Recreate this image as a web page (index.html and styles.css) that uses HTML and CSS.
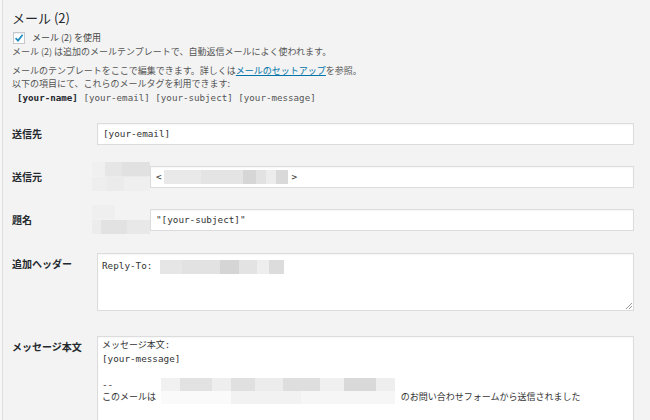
FILE: index.html
```html
<!DOCTYPE html>
<html lang="ja">
<head>
  <meta charset="UTF-8">
  <title>メール (2)</title>
  <link rel="stylesheet" href="styles.css">
</head>
<body>
  <div class="panel">
    <h2 class="title">メール (2)</h2>

    <label class="use-mail">
      <span class="checkbox">
        <svg width="10" height="10" viewBox="0 0 10 10"><path d="M1.6 5.2 L4 7.6 L8.6 1.8" fill="none" stroke="#1e8cbe" stroke-width="1.7"/></svg>
      </span>
      メール (2) を使用
    </label>
    <p class="desc">メール (2) は追加のメールテンプレートで、自動返信メールによく使われます。</p>

    <p class="help">メールのテンプレートをここで編集できます。詳しくは<a href="#">メールのセットアップ</a>を参照。</p>
    <p class="help">以下の項目にて、これらのメールタグを利用できます:</p>
    <p class="tags"><b>[your-name]</b> [your-email] [your-subject] [your-message]</p>

    <div class="fields">
      <div class="row">
        <div class="label">送信先</div>
        <div class="field"><div class="input">[your-email]</div></div>
      </div>

      <div class="row">
        <div class="label">送信元</div>
        <div class="field">
          <span class="mosaic mosaic-a"></span>
          <div class="input">&lt;<span class="blur blur-from"></span>&gt;</div>
        </div>
      </div>

      <div class="row">
        <div class="label">題名</div>
        <div class="field">
          <span class="mosaic mosaic-b"></span>
          <div class="input">"[your-subject]"</div>
        </div>
      </div>

      <div class="row row-area">
        <div class="label">追加ヘッダー</div>
        <div class="field">
          <div class="textarea headers">Reply-To: <span class="blur blur-reply"></span></div>
        </div>
      </div>

      <div class="row row-area row-body">
        <div class="label">メッセージ本文</div>
        <div class="field">
          <div class="textarea body-text">
            <div>メッセージ本文:</div>
            <div>[your-message]</div>
            <div>&nbsp;</div>
            <div>--</div>
            <div>このメールは <span class="blur blur-site"></span> のお問い合わせフォームから送信されました</div>
          </div>
        </div>
      </div>
    </div>
  </div>
</body>
</html>
```

FILE: styles.css
```css
body {
  margin: 0;
  background: #f7f7f7;
  font-family: "Noto Sans CJK JP", "Liberation Sans", sans-serif;
  font-size: 9px;
  color: #555;
  overflow: hidden;
}

.panel {
  margin-left: 2px;
  border-left: 1px solid #dedede;
  background: #f3f3f3;
  height: 420px;
  overflow: hidden;
  padding: 0 16px 0 9px;
}

.title {
  margin: 0;
  padding-top: 8px;
  font-size: 13px;
  line-height: 20px;
  font-weight: normal;
  color: #23282d;
}

.use-mail {
  display: flex;
  align-items: center;
  gap: 7px;
  margin-top: 2px;
  height: 15px;
  color: #444;
}

.checkbox {
  width: 10px;
  height: 10px;
  border: 1px solid #c4c8cc;
  background: #fff;
  margin-left: 1px;
  display: flex;
  align-items: center;
  justify-content: center;
  box-shadow: inset 0 1px 1px rgba(0, 0, 0, 0.08);
}

.desc {
  margin: 0;
  line-height: 14px;
}

.help {
  margin: 0;
  line-height: 13px;
}

.desc + .help {
  margin-top: 5px;
}

.help a {
  color: #0073aa;
}

.tags {
  margin: 1px 0 0 5px;
  line-height: 14px;
  font-family: "DejaVu Sans Mono", monospace;
  font-size: 9.2px;
  color: #555;
}

.tags b {
  color: #23282d;
}

.fields {
  margin-top: 7px;
}

.row {
  display: grid;
  grid-template-columns: 85px 1fr;
  align-items: center;
  height: 43px;
}

.label {
  font-size: 10px;
  font-weight: bold;
  color: #23282d;
}

.field {
  display: flex;
  align-items: center;
}

.input {
  flex: 1;
  height: 20px;
  border: 1px solid #dcdcdc;
  background: #fff;
  box-shadow: inset 0 1px 2px rgba(0, 0, 0, 0.04);
  padding-left: 5px;
  display: flex;
  align-items: center;
  font-family: "DejaVu Sans Mono", "Noto Sans CJK JP", monospace;
  font-size: 9.3px;
  color: #333;
}

.mosaic {
  width: 58px;
  height: 29px;
  margin-left: -5px;
  flex: none;
  background:
    linear-gradient(to right, #f0f0f0 0 22%, #e6e6e6 22% 52%, #e1e1e1 52% 100%) top / 100% 50% no-repeat,
    linear-gradient(to right, #eeeeee 0 25%, #ebebeb 25% 55%, #efefef 55% 100%) bottom / 100% 50% no-repeat;
}

.mosaic-b {
  background:
    linear-gradient(to right, #efefef 0 40%, #f3f3f3 40% 100%) top / 100% 50% no-repeat,
    linear-gradient(to right, #ececec 0 15%, #e2e2e2 15% 60%, #e8e8e8 60% 100%) bottom / 100% 50% no-repeat;
}

.blur {
  display: inline-block;
  height: 14px;
  vertical-align: middle;
}

.blur-from {
  width: 124px;
  margin: 0 4px 0 2px;
  background: linear-gradient(to right, #e9e9e9 0 30%, #e4e4e4 30% 64%, #d6d6d6 64% 74%, #e2e2e2 74% 82%, #ececec 82% 90%, #d9d9d9 90% 100%);
}

.blur-reply {
  width: 124px;
  margin-left: 2px;
  background: linear-gradient(to right, #e6e6e6 0 18%, #e2e2e2 18% 48%, #d5d5d5 48% 64%, #e3e3e3 64% 78%, #eeeeee 78% 88%, #dcdcdc 88% 100%);
}

.blur-site {
  width: 234px;
  height: 26px;
  margin-top: -13px;
  vertical-align: top;
  background:
    linear-gradient(to right, #f1f1f1 0 8%, #e2e2e2 8% 22%, #eeeeee 22% 30%, #e0e0e0 30% 40%, #ececec 40% 52%, #dedede 52% 68%, #f0f0f0 68% 78%, #d9d9d9 78% 92%, #eeeeee 92% 100%) top / 100% 50% no-repeat,
    linear-gradient(to right, #fafafa 0 30%, #f2f2f2 30% 60%, #f6f6f6 60% 100%) bottom / 100% 50% no-repeat;
}

.row-area {
  align-items: start;
  height: auto;
  padding: 12px 0 13px;
}

.row-area .label {
  margin-top: 3px;
}

.row-body {
  padding-bottom: 0;
}

.textarea {
  flex: 1;
  position: relative;
  border: 1px solid #dcdcdc;
  background: #fff;
  box-shadow: inset 0 1px 2px rgba(0, 0, 0, 0.04);
  padding: 5px 4px 0;
  font-family: "DejaVu Sans Mono", "Noto Sans CJK JP", monospace;
  font-size: 9.3px;
  line-height: 13px;
  color: #333;
}

.headers {
  height: 51px;
}

.headers::after {
  content: "";
  position: absolute;
  right: 1px;
  bottom: 1px;
  width: 6px;
  height: 6px;
  background: linear-gradient(135deg, transparent 45%, #999 45% 55%, transparent 55% 70%, #999 70% 80%, transparent 80%);
}

.body-text {
  height: 100px;
  padding-top: 2px;
}

.body-text div {
  white-space: nowrap;
}

.body-text div:first-child,
.body-text div:last-child {
  font-size: 9px;
}
```
